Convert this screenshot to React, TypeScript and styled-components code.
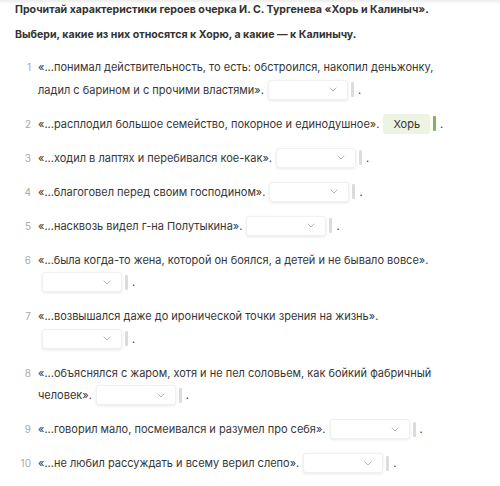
import React from "react";
import styled, { createGlobalStyle } from "styled-components";

const GlobalStyle = createGlobalStyle`
  body {
    margin: 0;
    background: #fff;
    font-family: Inter, "Noto Sans", sans-serif;
    color: #333;
  }
`;

const Page = styled.div`
  position: relative;
  width: 500px;
  height: 486px;
  overflow: hidden;
  padding: 0 0 0 15px;
  box-sizing: border-box;
  background: linear-gradient(#ececec, #fff 4px);
`;

const Title = styled.p`
  margin: 0;
  font-size: 10.6px;
  font-weight: 700;
  line-height: 20px;
  color: #333;
  & + & {
    margin-top: 5px;
  }
`;

const List = styled.ol`
  list-style: none;
  margin: 11px 0 0;
  padding: 0;
`;

const Item = styled.li`
  display: flex;
  margin-bottom: 11.5px;
`;

const Num = styled.span`
  flex: 0 0 16px;
  text-align: right;
  margin-right: 7px;
  font-size: 10px;
  line-height: 22.5px;
  color: #a8a8a8;
`;

const Text = styled.div`
  width: 425px;
  font-size: 11px;
  line-height: 22.5px;
  color: #363636;
`;

const Answer = styled.span`
  display: inline-flex;
  align-items: center;
  vertical-align: top;
  height: 22.5px;
  margin-left: 4px;
  white-space: nowrap;
`;

const Select = styled.span`
  display: inline-flex;
  align-items: center;
  justify-content: flex-end;
  box-sizing: border-box;
  width: 80px;
  height: 20px;
  padding-right: 10px;
  background: #fff;
  border: 1px solid #f0f0f0;
  border-radius: 3px;
  box-shadow: 0 1px 3px rgba(0, 0, 0, 0.09);
`;

const Chip = styled.span`
  display: inline-flex;
  align-items: center;
  height: 20px;
  padding: 0 10px;
  background: #eef4e3;
  border-radius: 2px;
  font-size: 11px;
  color: #333;
`;

const Bar = styled.span<{ $ok?: boolean }>`
  display: inline-block;
  width: 3px;
  height: 15px;
  margin-left: 3px;
  border-radius: 1px;
  background: ${(p) => (p.$ok ? "#80b45e" : "#dcdcdc")};
`;

const Dot = styled.span`
  margin-left: 4px;
  font-size: 11px;
  line-height: 22.5px;
`;

const Chevron = () => (
  <svg width="8" height="5" viewBox="0 0 8 5" fill="none">
    <path d="M1 1l3 3 3-3" stroke="#b5b5b5" strokeWidth="1" strokeLinecap="round" strokeLinejoin="round" />
  </svg>
);

type Row = { text: string; value?: string };

const rows: Row[] = [
  { text: "«...понимал действительность, то есть: обстроился, накопил деньжонку, ладил с барином и с прочими властями»." },
  { text: "«...расплодил большое семейство, покорное и единодушное».", value: "Хорь" },
  { text: "«...ходил в лаптях и перебивался кое-как»." },
  { text: "«...благоговел перед своим господином»." },
  { text: "«...насквозь видел г-на Полутыкина»." },
  { text: "«...была когда-то жена, которой он боялся, а детей и не бывало вовсе»." },
  { text: "«...возвышался даже до иронической точки зрения на жизнь»." },
  { text: "«...объяснялся с жаром, хотя и не пел соловьем, как бойкий фабричный человек»." },
  { text: "«...говорил мало, посмеивался и разумел про себя»." },
  { text: "«...не любил рассуждать и всему верил слепо»." },
];

export default function App() {
  return (
    <Page>
      <GlobalStyle />
      <Title>Прочитай характеристики героев очерка И. С. Тургенева «Хорь и Калиныч».</Title>
      <Title>Выбери, какие из них относятся к Хорю, а какие — к Калинычу.</Title>
      <List>
        {rows.map((r, i) => (
          <Item key={i}>
            <Num>{i + 1}</Num>
            <Text>
              {r.text}
              <Answer>
                {r.value ? (
                  <Chip>{r.value}</Chip>
                ) : (
                  <Select>
                    <Chevron />
                  </Select>
                )}
                <Bar $ok={!!r.value} />
                <Dot>.</Dot>
              </Answer>
            </Text>
          </Item>
        ))}
      </List>
    </Page>
  );
}
